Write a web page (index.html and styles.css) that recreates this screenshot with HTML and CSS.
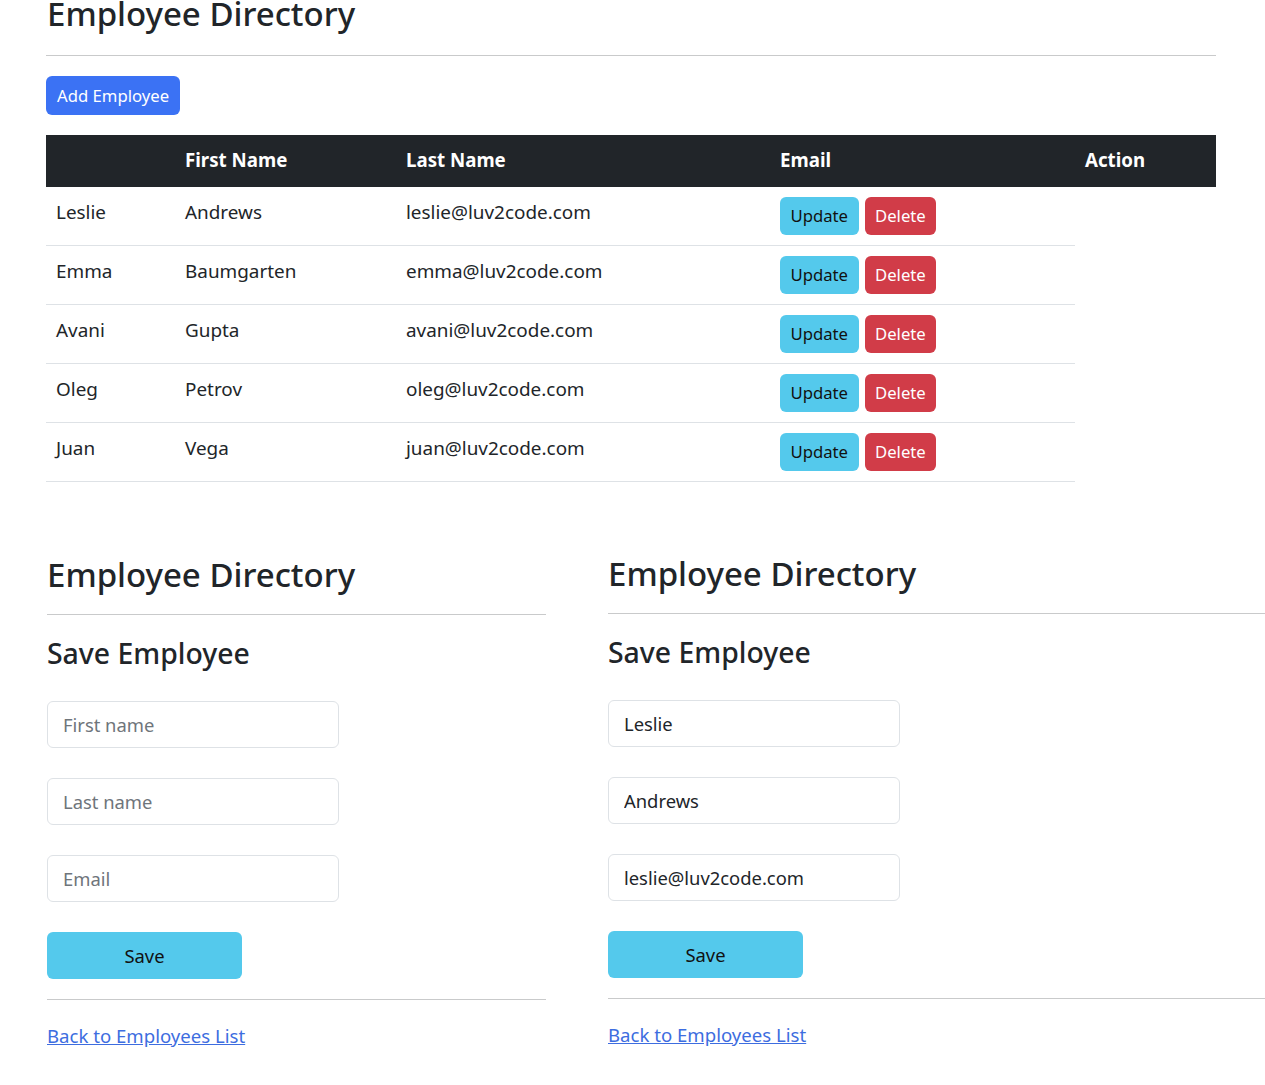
FILE: index.html
```html
<!DOCTYPE html>
<html lang="en">
<head>
<meta charset="utf-8">
<title>Employee Directory</title>
<link rel="stylesheet" href="styles.css">
</head>
<body>
<div class="list-page">
  <h1 class="title">Employee Directory</h1>
  <hr class="rule">
  <button class="btn btn-primary add-btn">Add Employee</button>
  <table class="emp-table">
    <thead>
      <tr>
        <th class="c1"></th>
        <th class="c2">First Name</th>
        <th class="c3">Last Name</th>
        <th class="c4">Email</th>
        <th class="c5">Action</th>
      </tr>
    </thead>
    <tbody>
      <tr><td>Leslie</td><td>Andrews</td><td>leslie@luv2code.com</td><td><div class="actions"><button class="btn btn-info">Update</button><button class="btn btn-danger">Delete</button></div></td></tr>
      <tr><td>Emma</td><td>Baumgarten</td><td>emma@luv2code.com</td><td><div class="actions"><button class="btn btn-info">Update</button><button class="btn btn-danger">Delete</button></div></td></tr>
      <tr><td>Avani</td><td>Gupta</td><td>avani@luv2code.com</td><td><div class="actions"><button class="btn btn-info">Update</button><button class="btn btn-danger">Delete</button></div></td></tr>
      <tr><td>Oleg</td><td>Petrov</td><td>oleg@luv2code.com</td><td><div class="actions"><button class="btn btn-info">Update</button><button class="btn btn-danger">Delete</button></div></td></tr>
      <tr><td>Juan</td><td>Vega</td><td>juan@luv2code.com</td><td><div class="actions"><button class="btn btn-info">Update</button><button class="btn btn-danger">Delete</button></div></td></tr>
    </tbody>
  </table>
</div>

<div class="forms">
  <section class="form-col form-left">
    <h1 class="title">Employee Directory</h1>
    <hr class="rule">
    <h2 class="subtitle">Save Employee</h2>
    <form class="emp-form">
      <input class="field" type="text" placeholder="First name">
      <input class="field" type="text" placeholder="Last name">
      <input class="field" type="text" placeholder="Email">
      <button type="button" class="btn save-btn">Save</button>
    </form>
    <hr class="rule rule-bottom">
    <a class="back-link" href="#">Back to Employees List</a>
  </section>
  <section class="form-col form-right">
    <h1 class="title">Employee Directory</h1>
    <hr class="rule">
    <h2 class="subtitle">Save Employee</h2>
    <form class="emp-form">
      <input class="field" type="text" value="Leslie">
      <input class="field" type="text" value="Andrews">
      <input class="field" type="text" value="leslie@luv2code.com">
      <button type="button" class="btn save-btn">Save</button>
    </form>
    <hr class="rule rule-bottom">
    <a class="back-link" href="#">Back to Employees List</a>
  </section>
</div>
</body>
</html>
```

FILE: styles.css
```css
html, body {
  margin: 0;
  padding: 0;
  background: #fff;
  overflow-x: hidden;
}
body {
  font-family: "Noto Sans", "Open Sans", sans-serif;
  color: #212529;
  font-size: 18.8px;
  line-height: 1.5;
}
.list-page {
  margin-left: 46px;
  width: 1170px;
}
.title {
  font-size: 33px;
  font-weight: 500;
  line-height: 40px;
  margin: 0;
  color: #212529;
}
.list-page .title {
  margin-top: -6px;
  padding-left: 1px;
}
.rule {
  border: 0;
  border-top: 1px solid #c9cacb;
  margin: 21px 0 0 0;
  height: 0;
}
.btn {
  font-family: inherit;
  border: 0;
  border-radius: 6px;
  cursor: pointer;
  font-size: 16.7px;
  line-height: 24px;
}
.btn-primary {
  background: #3b72f4;
  color: #fff;
}
.add-btn {
  display: block;
  margin-top: 20px;
  height: 39px;
  padding: 0 11px;
}
.emp-table {
  margin-top: 20px;
  border-collapse: collapse;
  table-layout: fixed;
  width: 1170px;
}
.emp-table th {
  background: #212529;
  color: #fff;
  font-weight: 700;
  font-size: 18.7px;
  line-height: 30px;
  text-align: left;
  padding: 10px 10px 12px 10px;
}
.c1 { width: 109px; }
.c2 { width: 201px; }
.c3 { width: 354px; }
.c4 { width: 285px; }
.c5 { width: 121px; }
.emp-table td {
  vertical-align: top;
  padding: 10px;
  line-height: 30px;
  border-bottom: 1px solid #dee2e6;
  font-size: 18.9px;
}
.actions {
  display: flex;
  gap: 6px;
}
.actions .btn {
  height: 38px;
  padding: 0 10.5px;
}
.btn-info {
  background: #54c9ec;
  color: #111;
}
.btn-danger {
  background: #d13c48;
  color: #fff;
}
.forms {
  display: flex;
  gap: 62px;
  margin-left: 47px;
  margin-top: 73px;
  width: 1300px;
}
.form-col {
  display: flex;
  flex-direction: column;
  align-items: flex-start;
}
.form-left { width: 499px; }
.form-right { width: 700px; margin-top: -1px; }
.form-col .rule {
  width: 100%;
  margin-top: 19px;
}
.subtitle {
  font-size: 28.4px;
  font-weight: 500;
  line-height: 35px;
  margin: 21px 0 0 0;
}
.emp-form {
  display: flex;
  flex-direction: column;
  gap: 30px;
  margin-top: 30px;
}
.field {
  box-sizing: border-box;
  width: 292px;
  height: 47px;
  border: 1px solid #dee2e6;
  border-radius: 6px;
  padding: 0 15px;
  font-family: inherit;
  font-size: 18.4px;
  color: #212529;
  background: #fff;
  outline: none;
}
.field::placeholder {
  color: #6f757b;
}
.save-btn {
  width: 195px;
  height: 47px;
  background: #54c9ec;
  color: #111;
  font-size: 18.4px;
}
.form-col .rule-bottom {
  margin-top: 20px;
}
.back-link {
  margin-top: 22px;
  color: #3d6de0;
  font-size: 18.6px;
  line-height: 28px;
  text-decoration: underline;
}
```
